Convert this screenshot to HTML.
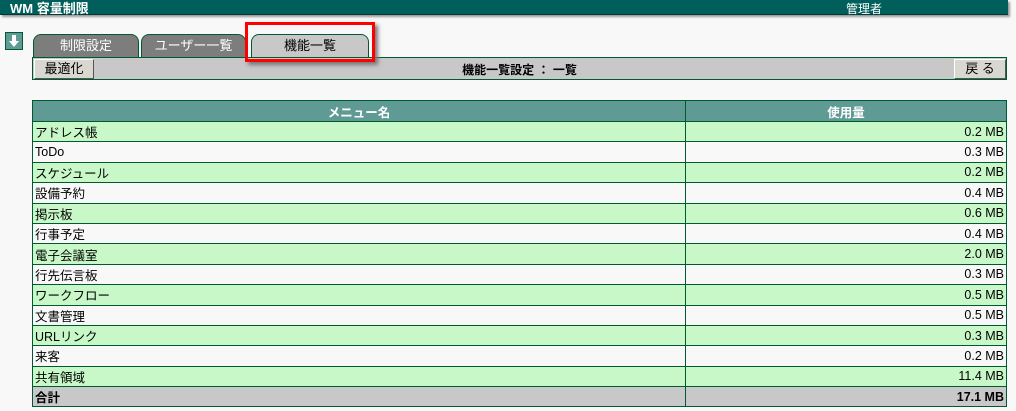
<!DOCTYPE html>
<html><head><meta charset="utf-8"><style>
body{margin:0;background:#f8f8f8;font-family:"Liberation Sans","Noto Sans CJK JP",sans-serif;font-size:12px;color:#000;width:1016px;height:411px;overflow:hidden;position:relative}
.top{position:absolute;left:0;top:0;width:1008px;height:14px;background:#005f5a;border-bottom:1px solid #003a36;box-shadow:2px 2px 2px #999;color:#fff}
.top .t{position:absolute;left:10px;top:-2px;font-weight:bold;font-size:13px}
.top .u{position:absolute;left:846px;top:0px;font-size:12px}
.arr{position:absolute;left:5px;top:32px;width:16px;height:16px;border:1px solid #005a30;background:#5f9a94}
.tab{position:absolute;top:34px;height:23px;border:1px solid #005a30;border-bottom:none;border-radius:8px 8px 0 0;background:#7d7d7d;color:#fff;text-align:center;line-height:22px;font-size:13px}
.red{position:absolute;left:245px;top:22px;width:124px;height:34px;border:3px solid #f00;box-shadow:3px 3px 4px #777;z-index:5}
.bar{position:absolute;left:32px;top:57px;width:973px;height:21px;background:#c8c8c8;border:1px solid #005a30}
.btn{position:absolute;top:1px;height:18px;background:#d8d8d0;border:1px solid #fff;border-right-color:#555;border-bottom-color:#555;font-size:13px;line-height:18px;text-align:center}
table{position:absolute;left:32px;top:100px;width:975px;border-collapse:collapse}
td,th{border:1px solid #005a30;padding:0 2px;height:19.4px;font-size:12.5px;font-weight:normal}
th{background:#5f9a94;color:#fff;font-weight:bold;height:20px}
tr.g td{background:#c8f8c8}
td.r{text-align:right}
tr.s td{background:#c8c8c8;font-weight:bold}
</style></head><body>
<div class="top"><span class="t">WM 容量制限</span><span class="u">管理者</span></div>
<div class="arr"><svg width="16" height="16"><path d="M6 2h4v6h3l-5 6-5-6h3z" fill="#fff"/></svg></div>
<div class="tab" style="left:33px;width:104px">制限設定</div>
<div class="tab" style="left:141px;width:103px">ユーザー一覧</div>
<div class="tab" style="left:251px;width:116px;background:#c8c8c8;color:#000">機能一覧</div>
<div class="red"></div>
<div class="bar">
<div class="btn" style="left:1px;width:58px">最適化</div>
<div style="position:absolute;left:0;width:973px;text-align:center;top:3px;font-weight:bold;font-size:12px">機能一覧設定 ： 一覧</div>
<div class="btn" style="left:921px;width:50px">戻 る</div>
</div>
<table>
<tr><th style="width:648px">メニュー名</th><th>使用量</th></tr>
<tr class="g"><td>アドレス帳</td><td class="r">0.2 MB</td></tr>
<tr><td>ToDo</td><td class="r">0.3 MB</td></tr>
<tr class="g"><td>スケジュール</td><td class="r">0.2 MB</td></tr>
<tr><td>設備予約</td><td class="r">0.4 MB</td></tr>
<tr class="g"><td>掲示板</td><td class="r">0.6 MB</td></tr>
<tr><td>行事予定</td><td class="r">0.4 MB</td></tr>
<tr class="g"><td>電子会議室</td><td class="r">2.0 MB</td></tr>
<tr><td>行先伝言板</td><td class="r">0.3 MB</td></tr>
<tr class="g"><td>ワークフロー</td><td class="r">0.5 MB</td></tr>
<tr><td>文書管理</td><td class="r">0.5 MB</td></tr>
<tr class="g"><td>URLリンク</td><td class="r">0.3 MB</td></tr>
<tr><td>来客</td><td class="r">0.2 MB</td></tr>
<tr class="g"><td>共有領域</td><td class="r">11.4 MB</td></tr>
<tr class="s"><td>合計</td><td class="r">17.1 MB</td></tr>
</table>
</body></html>
